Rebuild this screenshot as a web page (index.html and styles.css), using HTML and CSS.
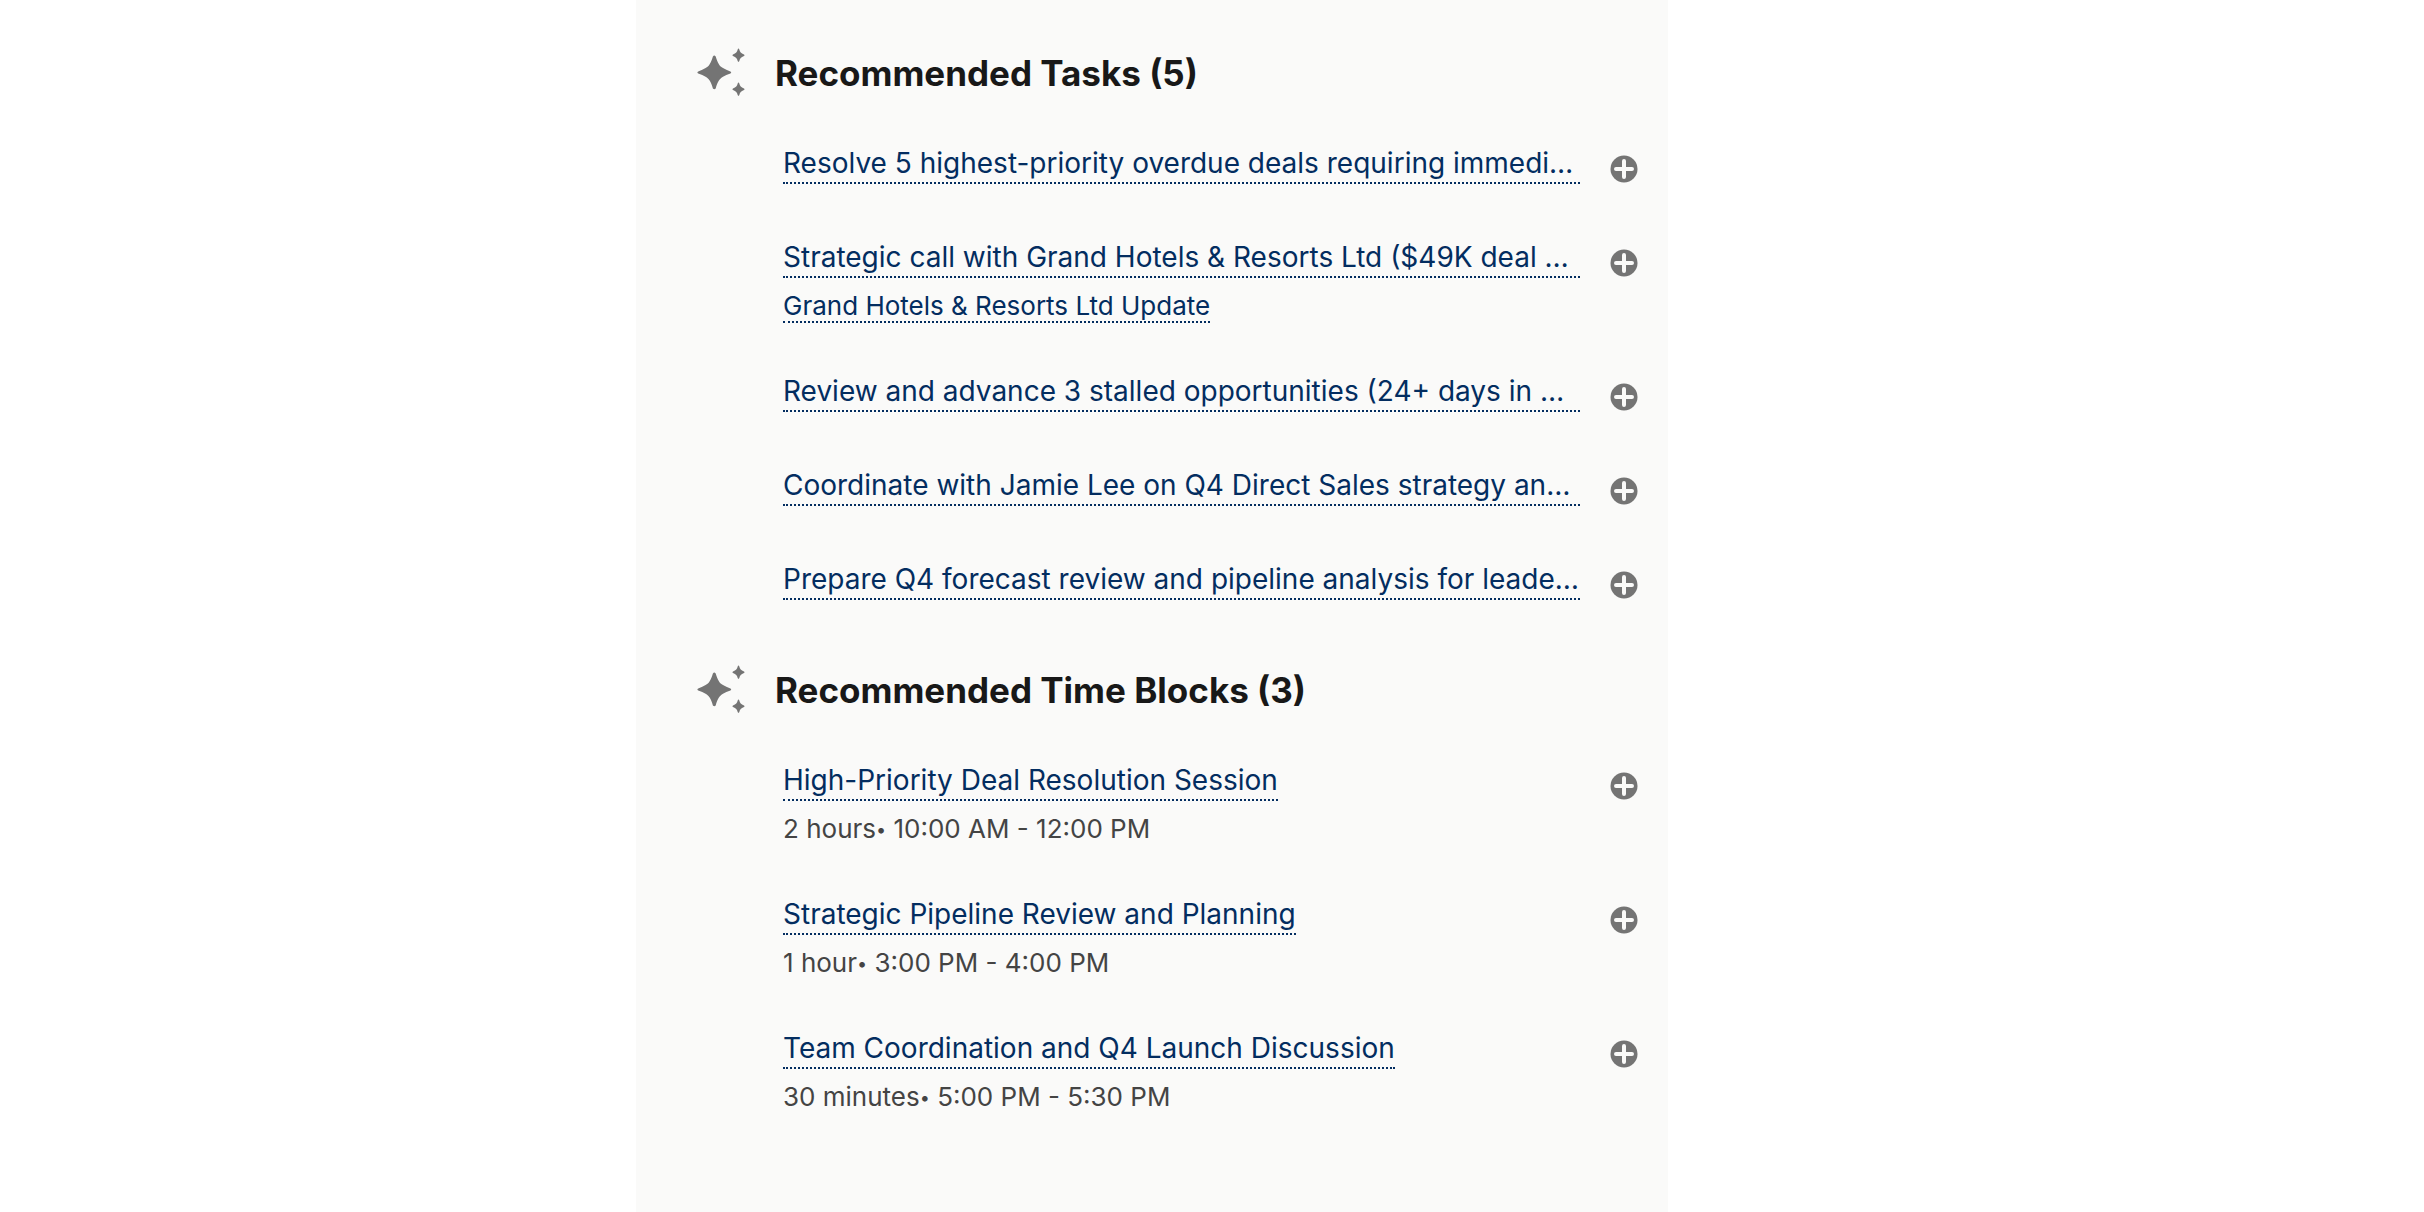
FILE: index.html
```html
<!DOCTYPE html>
<html lang="en">
<head>
    <meta charset="UTF-8">
    <meta name="viewport" content="width=device-width, initial-scale=1.0">
    <title>Recommendations</title>
    <link rel="stylesheet" href="styles.css">
</head>
<body>

    <!-- Shared icons -->
    <svg class="icon-defs" aria-hidden="true">
        <symbol id="icon-sparkles" viewBox="0 0 48 48">
            <path d="M15.9 8.4Q17.3 6.8 18.7 8.4C20.6 15 22.6 18.2 26 20Q29 21.8 33.4 23.6Q35 24.6 33.4 25.6Q29 27 26 28.8C22.6 30.6 20.6 34 18.7 40.4Q17.3 42 15.9 40.4C14 34 12 30.6 8.6 28.8Q5.6 27 1.2 25.6Q-.4 24.6 1.2 23.6Q5.6 21.8 8.6 20C12 18.2 14 15 15.9 8.4Z"/>
            <path d="M41.5 .4Q42 .4 42.3 1.4C43 4 43.9 5 47 6.4Q48.2 7.2 47 7.9C43.9 9.2 43 10.2 42.3 12.9Q41.5 14.7 40.7 12.9C40 10.2 39.1 9.2 36 7.9Q34.8 7.2 36 6.4C39.1 5 40 4 40.7 1.4Q41 .4 41.5 .4Z"/>
            <path d="M41.5 34.4Q42 34.4 42.3 35.4C43 38 43.9 39 47 40.4Q48.2 41.2 47 41.9C43.9 43.2 43 44.2 42.3 46.9Q41.5 48.7 40.7 46.9C40 44.2 39.1 43.2 36 41.9Q34.8 41.2 36 40.4C39.1 39 40 38 40.7 35.4Q41 34.4 41.5 34.4Z"/>
        </symbol>
        <symbol id="icon-add" viewBox="0 0 28 28">
            <circle class="add-disc" cx="14" cy="14" r="13.5"/>
            <path class="add-cross" d="M14 6V22M6 14H22"/>
        </symbol>
    </svg>

    <main class="panel">
        <!-- Tasks -->
        <section class="section">
            <div class="section-header">
                <svg class="sparkles" aria-hidden="true"><use href="#icon-sparkles"/></svg>
                <h2>Recommended Tasks (5)</h2>
            </div>
            <ul class="list">
                <li class="item">
                    <div class="item-body">
                        <a class="title full" href="#">Resolve 5 highest-priority overdue deals requiring immedi…</a>
                    </div>
                    <button class="add" type="button" aria-label="Add task"><svg aria-hidden="true"><use href="#icon-add"/></svg></button>
                </li>
                <li class="item">
                    <div class="item-body">
                        <a class="title full" href="#">Strategic call with Grand Hotels &amp; Resorts Ltd ($49K deal …</a>
                        <p class="detail"><a class="related" href="#">Grand Hotels &amp; Resorts Ltd Update</a></p>
                    </div>
                    <button class="add" type="button" aria-label="Add task"><svg aria-hidden="true"><use href="#icon-add"/></svg></button>
                </li>
                <li class="item">
                    <div class="item-body">
                        <a class="title full" href="#">Review and advance 3 stalled opportunities (24+ days in …</a>
                    </div>
                    <button class="add" type="button" aria-label="Add task"><svg aria-hidden="true"><use href="#icon-add"/></svg></button>
                </li>
                <li class="item">
                    <div class="item-body">
                        <a class="title full" href="#">Coordinate with Jamie Lee on Q4 Direct Sales strategy an…</a>
                    </div>
                    <button class="add" type="button" aria-label="Add task"><svg aria-hidden="true"><use href="#icon-add"/></svg></button>
                </li>
                <li class="item">
                    <div class="item-body">
                        <a class="title full" href="#">Prepare Q4 forecast review and pipeline analysis for leade…</a>
                    </div>
                    <button class="add" type="button" aria-label="Add task"><svg aria-hidden="true"><use href="#icon-add"/></svg></button>
                </li>
            </ul>
        </section>

        <!-- Time Blocks -->
        <section class="section">
            <div class="section-header">
                <svg class="sparkles" aria-hidden="true"><use href="#icon-sparkles"/></svg>
                <h2>Recommended Time Blocks (3)</h2>
            </div>
            <ul class="list">
                <li class="item">
                    <div class="item-body">
                        <a class="title" href="#">High-Priority Deal Resolution Session</a>
                        <p class="detail">2 hours<span class="bullet">•</span> 10:00 AM - 12:00 PM</p>
                    </div>
                    <button class="add" type="button" aria-label="Add time block"><svg aria-hidden="true"><use href="#icon-add"/></svg></button>
                </li>
                <li class="item">
                    <div class="item-body">
                        <a class="title" href="#">Strategic Pipeline Review and Planning</a>
                        <p class="detail">1 hour<span class="bullet">•</span> 3:00 PM - 4:00 PM</p>
                    </div>
                    <button class="add" type="button" aria-label="Add time block"><svg aria-hidden="true"><use href="#icon-add"/></svg></button>
                </li>
                <li class="item">
                    <div class="item-body">
                        <a class="title" href="#">Team Coordination and Q4 Launch Discussion</a>
                        <p class="detail">30 minutes<span class="bullet">•</span> 5:00 PM - 5:30 PM</p>
                    </div>
                    <button class="add" type="button" aria-label="Add time block"><svg aria-hidden="true"><use href="#icon-add"/></svg></button>
                </li>
            </ul>
        </section>
    </main>

</body>
</html>
```

FILE: styles.css
```css
body {
    display: grid;
    grid-template-columns: 53fr 86fr 63fr;
    min-height: 100vh;
    margin: 0;
    background-color: #fff;
    color: #444;
    font-family: Inter, Arial, sans-serif;
}
.icon-defs {
    display: none;
}
.panel {
    grid-column: 2;
    min-width: 0;
    box-sizing: border-box;
    padding: 48px 30px 48px 61px;
    background-color: #fafaf9;
}
.section {
    margin-bottom: 65px;
}
.section:last-child {
    margin-bottom: 0;
}
.section-header {
    display: flex;
    align-items: center;
    gap: 30px;
    height: 48px;
    margin-bottom: 46px;
}
.sparkles {
    width: 48px;
    height: 48px;
    fill: #747474;
}
h2 {
    margin: 0;
    padding-top: 2px;
    color: #181818;
    font-size: 35px;
    font-weight: 700;
    line-height: 46px;
}
/* Recommendation rows */
.list {
    display: flex;
    flex-direction: column;
    gap: 52px;
    margin: 0;
    padding: 0 0 0 86px;
    list-style: none;
}
.item {
    display: flex;
    align-items: flex-start;
    gap: 30px;
}
.item-body {
    flex: 1;
    min-width: 0;
}
.title {
    display: block;
    width: fit-content;
    max-width: 100%;
    padding-top: 2px;
    overflow: hidden;
    border-bottom: 2px dotted #032d60;
    color: #032d60;
    font-size: 28px;
    line-height: 38px;
    text-decoration: none;
    text-overflow: ellipsis;
    white-space: nowrap;
}
.title.full {
    width: auto;
}
.detail {
    margin: 16px 0 0;
    font-size: 26px;
    line-height: 24px;
}
.related {
    border-bottom: 2px dotted #032d60;
    color: #032d60;
    text-decoration: none;
}
.bullet {
    font-size: 18px;
    vertical-align: 2px;
    line-height: 1;
}
/* Add button */
.add {
    width: 28px;
    height: 28px;
    margin-top: 13px;
    padding: 0;
    border: none;
    background: none;
    cursor: pointer;
}
.add svg {
    display: block;
    width: 28px;
    height: 28px;
}
.add-disc {
    fill: #747474;
}
.add-cross {
    fill: none;
    stroke: #fafaf9;
    stroke-width: 4;
    stroke-linecap: round;
}
```
